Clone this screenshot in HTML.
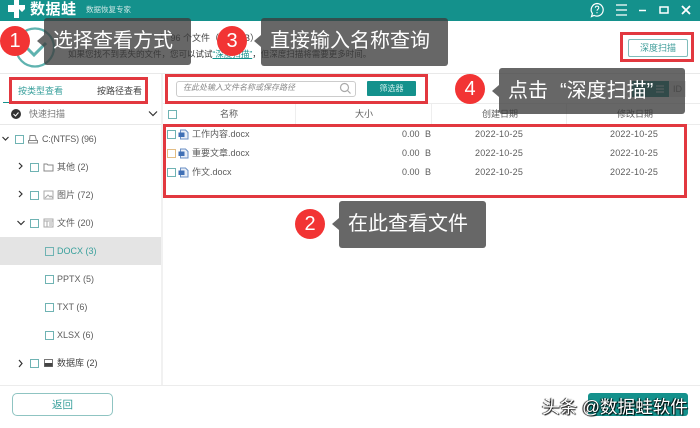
<!DOCTYPE html>
<html><head><meta charset="utf-8">
<style>
html,body{margin:0;padding:0;background:#fff}
#p{position:relative;width:700px;height:428px;overflow:hidden;background:#fff;font-family:"Liberation Sans","Noto Sans CJK SC",sans-serif;color:#5c5c5c;font-size:9px}
#p div,#p span.a,#p svg{position:absolute}
.t{white-space:nowrap;line-height:14px}
.cb{width:7px;height:7px;border:1px solid #6fb3b3;background:#fff}
.rb{border:3px solid #e2383f;box-sizing:border-box}
.tip{background:rgba(60,60,60,.78);border-radius:3px;color:#fff;font-size:20px;line-height:46px;white-space:nowrap;box-sizing:border-box}
.tip:before{content:"";position:absolute;left:-7px;top:17px;border:6px solid transparent;border-left:0;border-right:7px solid rgba(60,60,60,.78)}
.c{background:#f23434;border-radius:50%;color:#fff;font-size:20px;text-align:center;width:30px;height:30px;line-height:30px}
</style></head><body><div id="p">

<div style="left:0;top:0;width:700px;height:21px;background:#14918c"></div>
<svg style="left:7px;top:0" width="20" height="18" viewBox="0 0 20 18"><path d="M7 0h5v5h6v4l-3 3-3-3v9H7v-6H1V5h6z" fill="#fff"/></svg>
<div class="t" style="left:30px;top:1px;color:#fff;font-size:15px;line-height:18px;font-weight:bold;letter-spacing:.5px">数据蛙</div>
<div class="t" style="left:86px;top:3px;color:#cfe8e6;font-size:7.5px">数据恢复专家</div>
<svg style="left:588px;top:0" width="112" height="21" viewBox="0 0 112 21" fill="none" stroke="#fff" stroke-width="1.5">
<path d="M9 3.500a6.300 6.300 0 1 1-3 11.900L3.500 16.500l.9-3A6.300 6.300 0 0 1 9 3.500z" stroke-width="1.200"/>
<path d="M7.300 7.800c0-2.200 3.500-2.200 3.500 0 0 1.500-1.800 1.400-1.800 3" stroke-width="1"/><path d="M9 12v1.200" stroke-width="1"/>
<path d="M28 5h11M28 10h11M28 15h11" stroke-width="1.200"/>
<path d="M51 10.500h7"/>
<rect x="72" y="7" width="8" height="6" />
<path d="M94 6l8 8M102 6l-8 8" stroke-width="1.800"/></svg>

<svg style="left:14px;top:26px" width="42" height="44" viewBox="0 0 42 44" fill="none"><circle cx="21" cy="21.500" r="19" stroke="#5fb3b0" stroke-width="2.200"/><path d="M13 22l7 7 12-12" stroke="#5fb3b0" stroke-width="3"/></svg>
<div class="t" style="left:159px;top:31px;color:#444;font-size:9px">共 96 个文件（72.88 B）</div>
<div class="t" style="left:68px;top:47px;color:#333;font-size:8.5px">如果您找不到丢失的文件，您可以试试<span style="color:#14918c;text-decoration:underline">“深度扫描”</span>，但深度扫描将需要更多时间。</div>
<div style="left:628px;top:39px;width:58px;height:16px;border:1px solid #7fbcba;border-radius:2px;color:#3f9d9a;text-align:center;line-height:16px;font-size:9px">深度扫描</div>
<div style="left:0;top:73px;width:700px;height:1px;background:#e9e9e9"></div>

<div class="t" style="left:18px;top:84px;color:#39a09c">按类型查看</div>
<div class="t" style="left:97px;top:84px;color:#444">按路径查看</div>
<div style="left:3px;top:102px;width:38px;height:1px;background:#14918c"></div>
<div style="left:0;top:124px;width:161px;height:1px;background:#e8e8e8"></div>
<svg style="left:10px;top:108px" width="12" height="12" viewBox="0 0 12 12"><circle cx="6" cy="6" r="5" fill="#333"/><path d="M3.500 6l2 2 3-3.500" stroke="#fff" fill="none"/></svg>
<div class="t" style="left:29px;top:107px;color:#777">快速扫描</div>
<svg style="left:148px;top:110px" width="10" height="8" viewBox="0 0 10 8" fill="none" stroke="#333" stroke-width="1.200"><path d="M1 1.500l4 4 4-4"/></svg>

<svg style="left:0;top:130px" width="30" height="260" viewBox="0 0 30 260" fill="none" stroke="#333" stroke-width="1.200">
<path d="M2.500 7l3 3 3-3"/><path d="M19 33l3 3-3 3M19 61l3 3-3 3"/><path d="M17.500 91l3.500 3.500 3.500-3.500"/><path d="M19 230l3 3.500-3 3.500"/></svg>
<div class="cb" style="left:15px;top:135px"></div>
<div class="cb" style="left:30px;top:163px"></div>
<div class="cb" style="left:30px;top:191px"></div>
<div class="cb" style="left:30px;top:219px"></div>
<svg style="left:27px;top:134px" width="12" height="10" viewBox="0 0 12 10" fill="none" stroke="#888"><path d="M3 1.500h5l1.500 5h-7zM1.500 6.500h9v2.500h-9z"/></svg>
<svg style="left:43px;top:162px" width="11" height="10" viewBox="0 0 11 10" fill="none" stroke="#888"><path d="M1 2h3l1 1h5v6H1z"/></svg>
<svg style="left:43px;top:190px" width="11" height="10" viewBox="0 0 11 10" fill="none" stroke="#aaa"><rect x="1" y="1" width="9" height="8"/><path d="M2 8l3-3 2 2 1-1 2 2"/></svg>
<svg style="left:43px;top:218px" width="11" height="10" viewBox="0 0 11 10" fill="none" stroke="#aaa"><rect x="1" y="1" width="9" height="8"/><path d="M1 3h9M4 3v6M6 5h3M6 7h3"/></svg>
<div class="t" style="left:42px;top:132px;letter-spacing:-.2px">C:(NTFS) (96)</div>
<div class="t" style="left:57px;top:160px">其他 (2)</div>
<div class="t" style="left:57px;top:188px">图片 (72)</div>
<div class="t" style="left:57px;top:216px">文件 (20)</div>

<div style="left:0;top:237px;width:161px;height:28px;background:#e4e4e4"></div>
<div class="cb" style="left:45px;top:247px;background:transparent"></div>
<div class="t" style="left:57px;top:244px;color:#39a09c">DOCX (3)</div>
<div class="cb" style="left:45px;top:275px"></div>
<div class="t" style="left:57px;top:272px">PPTX (5)</div>
<div class="cb" style="left:45px;top:303px"></div>
<div class="t" style="left:57px;top:300px">TXT (6)</div>
<div class="cb" style="left:45px;top:331px"></div>
<div class="t" style="left:57px;top:328px">XLSX (6)</div>
<div class="cb" style="left:30px;top:359px"></div>
<svg style="left:43px;top:358px" width="11" height="10" viewBox="0 0 11 10"><rect x="1.500" y="1.500" width="8" height="7" fill="#fff" stroke="#777"/><rect x="1.500" y="5" width="8" height="3.500" fill="#444"/></svg>
<div class="t" style="left:57px;top:356px;color:#444">数据库 (2)</div>

<div style="left:161px;top:74px;width:2px;height:311px;background:#f1f1f1"></div>
<div style="left:0;top:385px;width:700px;height:1px;background:#ececec"></div>
<div style="left:12px;top:393px;width:99px;height:21px;border:1px solid #8fc4c2;border-radius:5px;color:#39a09c;text-align:center;line-height:23px;font-size:10.500px">返回</div>

<div style="left:176px;top:81px;width:178px;height:14px;border:1px solid #ccc;border-radius:3px"></div>
<div class="t" style="left:183px;top:81px;color:#888;font-size:8px;font-style:italic">在此处输入文件名称或保存路径</div>
<svg style="left:339px;top:82px" width="13" height="13" viewBox="0 0 13 13" fill="none" stroke="#aaa" stroke-width="1.200"><circle cx="5.500" cy="5.500" r="4"/><path d="M8.500 8.500l3 3"/></svg>
<div style="left:367px;top:81px;width:49px;height:15px;background:#14918c;border-radius:1px;color:#cfeeec;text-align:center;line-height:15px;font-size:8px">筛选器</div>
<div style="left:632px;top:81px;width:37px;height:16px;background:#0d7c78"></div>
<svg style="left:655px;top:84px" width="10" height="10" viewBox="0 0 10 10" stroke="#cfeeec" stroke-width="1"><path d="M1 2h8M1 5h8M1 8h8"/></svg>
<div style="left:669px;top:81px;width:17px;height:16px;background:#e4e4e4;color:#777;text-align:center;line-height:16px;font-size:9px">ID</div>

<div style="left:163px;top:103px;width:537px;height:1px;background:#ececec"></div>
<div style="left:163px;top:124px;width:537px;height:1px;background:#ececec"></div>
<div class="cb" style="left:168px;top:110px"></div>
<div class="t" style="left:220px;top:107px">名称</div>
<div class="t" style="left:355px;top:107px">大小</div>
<div class="t" style="left:482px;top:107px">创建日期</div>
<div class="t" style="left:617px;top:107px">修改日期</div>
<div style="left:295px;top:104px;width:1px;height:20px;background:#eee"></div>
<div style="left:431px;top:104px;width:1px;height:20px;background:#eee"></div>
<div style="left:566px;top:104px;width:1px;height:20px;background:#eee"></div>

<div class="cb" style="left:167px;top:130px"></div>
<div class="cb" style="left:167px;top:149px;border-color:#e3bd85"></div>
<div class="cb" style="left:167px;top:168px"></div>
<svg style="left:178px;top:129px" width="11" height="49" viewBox="0 0 11 49"><g id="d"><path d="M2.500 1h5l2.500 2.500V10h-7.500z" fill="#e8eef7" stroke="#6a8fc4"/><rect x="0.500" y="3.500" width="6" height="4.500" fill="#3f6fb5"/></g><use href="#d" y="19"/><use href="#d" y="38"/></svg>
<div class="t" style="left:192px;top:127px">工作内容.docx</div>
<div class="t" style="left:192px;top:146px">重要文章.docx</div>
<div class="t" style="left:192px;top:165px">作文.docx</div>
<div class="t" style="left:402px;top:127px;word-spacing:3px">0.00 B</div>
<div class="t" style="left:402px;top:146px;word-spacing:3px">0.00 B</div>
<div class="t" style="left:402px;top:165px;word-spacing:3px">0.00 B</div>
<div class="t" style="left:475px;top:127px;letter-spacing:.2px">2022-10-25</div>
<div class="t" style="left:475px;top:146px;letter-spacing:.2px">2022-10-25</div>
<div class="t" style="left:475px;top:165px;letter-spacing:.2px">2022-10-25</div>
<div class="t" style="left:610px;top:127px;letter-spacing:.2px">2022-10-25</div>
<div class="t" style="left:610px;top:146px;letter-spacing:.2px">2022-10-25</div>
<div class="t" style="left:610px;top:165px;letter-spacing:.2px">2022-10-25</div>

<div class="rb" style="left:9px;top:77px;width:139px;height:27px"></div>
<div class="rb" style="left:165px;top:74px;width:263px;height:30px"></div>
<div class="rb" style="left:620px;top:32px;width:74px;height:30px"></div>
<div class="rb" style="left:163px;top:124px;width:524px;height:74px"></div>

<div class="tip" style="left:44px;top:18px;width:147px;height:47px;padding-left:9px">选择查看方式</div>
<div class="tip" style="left:261px;top:18px;width:187px;height:48px;padding-left:9px">直接输入名称查询</div>
<div class="tip" style="left:499px;top:68px;width:186px;height:46px;padding-left:9px">点击<span style="margin-left:12px">“</span>深度扫描”</div>
<div class="tip" style="left:339px;top:201px;width:147px;height:47px;padding-left:9px">在此查看文件</div>
<div class="c" style="left:0;top:26px">1</div>
<div class="c" style="left:217px;top:26px">3</div>
<div class="c" style="left:455px;top:74px">4</div>
<div class="c" style="left:295px;top:209px">2</div>

<div style="left:588px;top:393px;width:100px;height:23px;background:#14918c;border-radius:3px"></div>
<div class="t" style="left:542px;top:396px;font-size:17.600px;line-height:22px;color:#fff;text-shadow:1px 1px 1px #000,-1px 0 1px #000">头条 @数据蛙软件</div>
</div></body></html>
